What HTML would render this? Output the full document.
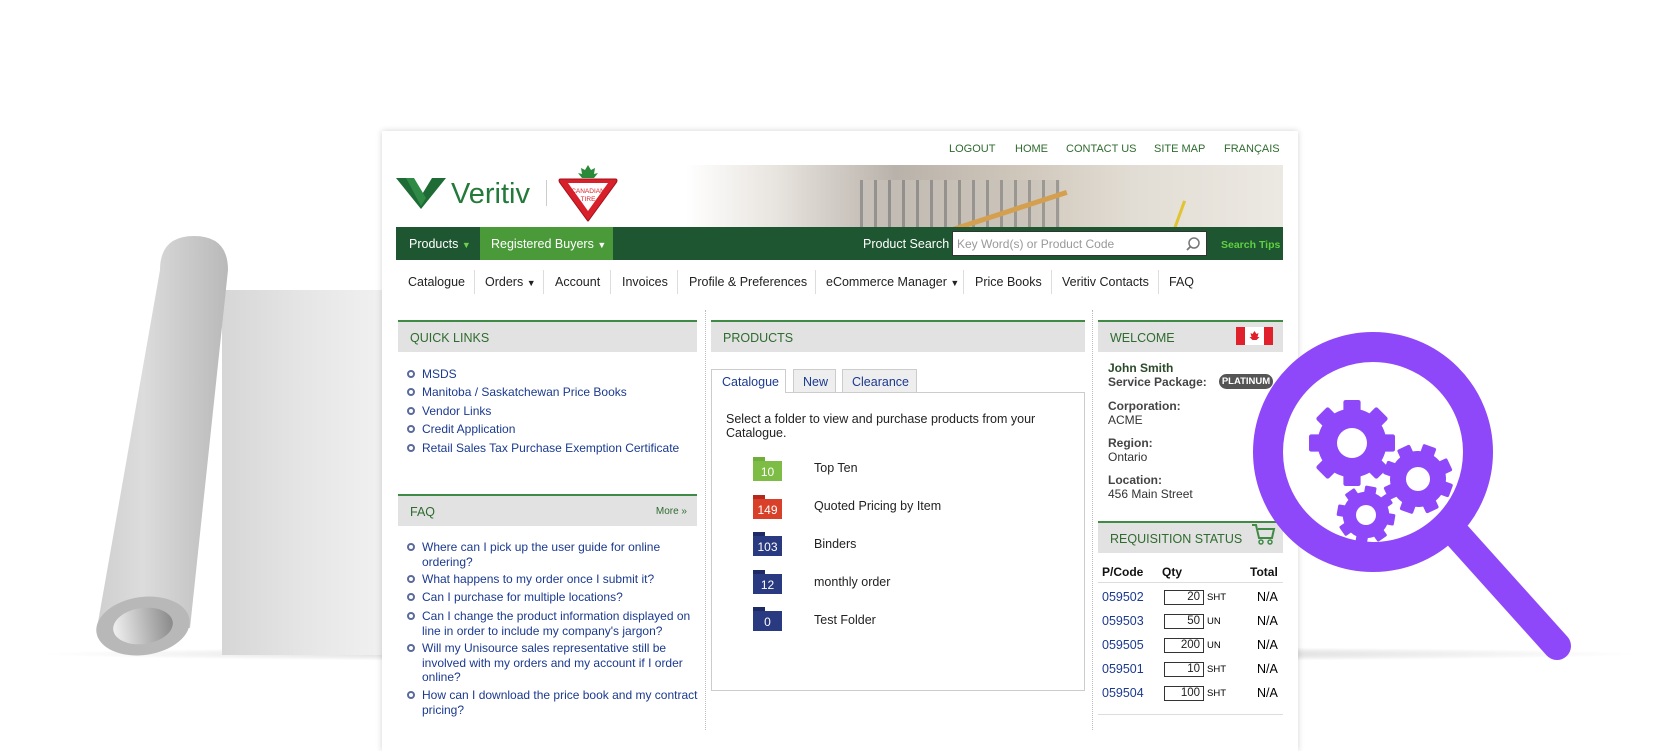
<!DOCTYPE html>
<html><head><meta charset="utf-8"><style>
*{margin:0;padding:0;box-sizing:border-box}
body{width:1680px;height:720px;overflow:hidden;background:#fff;font-family:"Liberation Sans",Arial,sans-serif;position:relative}
.a{position:absolute;white-space:nowrap}
.card{position:absolute;left:382px;top:131px;width:916px;height:620px;background:#fff;box-shadow:0 0 6px rgba(0,0,0,.18)}
.tl{font-size:11px;color:#2f6b2f;top:143px}
.nav{position:absolute;left:396px;top:227px;width:887px;height:33px;background:#1f5632}
.sub{font-size:12.5px;color:#222;top:275px}
.sep{position:absolute;top:270px;width:1px;height:24px;background:#ddd}
.hd{position:absolute;height:32px;background:#e2e2e2;border-top:2px solid #3f8a45;font-size:12.5px;color:#2f6b2f;padding:9px 12px}
.lk{font-size:12px;color:#1b3a8f;left:422px;line-height:14.5px;white-space:normal;width:276px}
.bul{position:absolute;left:-15px;top:3px;width:8px;height:8px;border:2px solid #5a6a9a;border-radius:50%}
.fd{position:absolute;left:753px;width:29px;height:24px}
.fd b{position:absolute;left:0;top:0;width:12px;height:4px}
.fd i{position:absolute;left:0;top:4px;width:29px;height:20px;font-style:normal;color:#fff;font-size:12px;text-align:center;line-height:22px}
.fl{font-size:12.5px;color:#222;left:814px}
.w{font-size:12px;color:#333;left:1108px}
.wb{font-weight:bold;color:#444}
.row{font-size:12.5px}
.qty{position:absolute;left:1164px;width:40px;height:15px;border:1px solid #333;font-size:11.5px;text-align:right;padding-right:3px;line-height:13px;color:#222}
</style></head><body>
<div class="a" style="left:30px;top:646px;width:1620px;height:16px;border-radius:50%;background:radial-gradient(ellipse at center,rgba(0,0,0,.25),rgba(0,0,0,0) 70%)"></div>
<svg class="a" style="left:0;top:0" width="400" height="720">
<defs>
<linearGradient id="sh" x1="0" x2="1"><stop offset="0" stop-color="#d6d6d6"/><stop offset=".5" stop-color="#e6e6e6"/><stop offset="1" stop-color="#f2f2f2"/></linearGradient>
<linearGradient id="tb" x1="0" x2="1"><stop offset="0" stop-color="#cfcfcf"/><stop offset=".35" stop-color="#dcdcdc"/><stop offset="1" stop-color="#b9b9b9"/></linearGradient>
<linearGradient id="hl" x1="0" x2="1"><stop offset="0" stop-color="#f0f0f0"/><stop offset="1" stop-color="#8a8a8a"/></linearGradient>
</defs>
<rect x="222" y="290" width="170" height="365" fill="url(#sh)"/>
<path d="M160 270 Q160 236 194 236 Q228 236 228 270 L190 628 L97 628 Z" fill="url(#tb)"/>
<ellipse cx="143" cy="626" rx="47" ry="29" transform="rotate(-8 143 626)" fill="#b8b8b8"/>
<ellipse cx="143" cy="626" rx="30" ry="18" transform="rotate(-8 143 626)" fill="url(#hl)"/>
</svg>
<div class="card"></div>
<div class="a tl" style="left:949px">LOGOUT</div>
<div class="a tl" style="left:1015px">HOME</div>
<div class="a tl" style="left:1066px">CONTACT US</div>
<div class="a tl" style="left:1154px">SITE MAP</div>
<div class="a tl" style="left:1224px">FRANÇAIS</div>
<svg class="a" style="left:396px;top:176px" width="52" height="34"><path d="M0 2 H14 L25 20 L36 2 H50 L25 33 Z" fill="#1e6b36"/><path d="M10 2 H18 L30 22 L25 30 Z" fill="#2f8a45"/></svg>
<div class="a" style="left:451px;top:178px;font-size:29px;color:#237a3b">Veritiv</div>
<div class="a" style="left:546px;top:180px;width:1px;height:26px;background:#ccc"></div>
<svg class="a" style="left:556px;top:163px" width="64" height="60"><path d="M32 2 l3 5 4-2-1 6 4-1-4 5H26l-4-5 4 1-1-6 4 2z" fill="#2a8a3a"/><path d="M4 16 H60 Q62 17 60 20 L33 57 Q32 59 31 57 L4 20 Q2 17 4 16Z" fill="#d8202a" stroke="#a0101a" stroke-width="1"/><path d="M12 20 H52 L32 48 Z" fill="#fff"/><text x="32" y="30" font-size="6.5" fill="#d8202a" text-anchor="middle" font-family="Liberation Sans">CANADIAN</text><text x="32" y="38" font-size="6.5" fill="#d8202a" text-anchor="middle" font-family="Liberation Sans">TIRE</text></svg>
<div class="a" style="left:686px;top:165px;width:597px;height:62px;background:linear-gradient(90deg,#fff 0%,#e8e4df 15%,#b9b2aa 35%,#cfc6ba 55%,#e2ddd4 75%,#ece9e3 100%)"></div>
<div class="a" style="left:860px;top:180px;width:200px;height:47px;background:repeating-linear-gradient(90deg,#777 0 3px,#c8c2ba 3px 14px);opacity:.6"></div>
<div class="a" style="left:940px;top:210px;width:130px;height:5px;background:#d4a050;transform:rotate(-18deg)"></div>
<div class="a" style="left:1178px;top:200px;width:3px;height:30px;background:#e2c330;transform:rotate(20deg)"></div>
<div class="nav"></div>
<div class="a" style="left:480px;top:227px;width:133px;height:33px;background:#4a9a3a"></div>
<div class="a" style="left:409px;top:237px;font-size:12.5px;color:#fff">Products <span style="color:#6fd04f;font-size:9px">▼</span></div>
<div class="a" style="left:491px;top:237px;font-size:12.5px;color:#fff">Registered Buyers <span style="font-size:9px">▼</span></div>
<div class="a" style="left:863px;top:237px;font-size:12.5px;color:#fff">Product Search</div>
<div class="a" style="left:952px;top:231px;width:255px;height:25px;background:#fff;border:1px solid #333;font-size:12px;color:#999;padding:5px 4px">Key Word(s) or Product Code</div>
<svg class="a" style="left:1185px;top:236px" width="16" height="16"><circle cx="9" cy="7" r="5" fill="none" stroke="#777" stroke-width="1.5"/><path d="M5.5 10.5 L2 14" stroke="#777" stroke-width="1.8"/></svg>
<div class="a" style="left:1221px;top:239px;font-size:10.5px;color:#5fd040;font-weight:bold">Search Tips</div>
<div class="a sub" style="left:408px">Catalogue</div><div class="sep" style="left:474px"></div>
<div class="a sub" style="left:485px">Orders <span style="font-size:9px">▼</span></div><div class="sep" style="left:543px"></div>
<div class="a sub" style="left:555px">Account</div><div class="sep" style="left:610px"></div>
<div class="a sub" style="left:622px">Invoices</div><div class="sep" style="left:677px"></div>
<div class="a sub" style="left:689px">Profile &amp; Preferences</div><div class="sep" style="left:815px"></div>
<div class="a sub" style="left:826px">eCommerce Manager <span style="font-size:9px">▼</span></div><div class="sep" style="left:963px"></div>
<div class="a sub" style="left:975px">Price Books</div><div class="sep" style="left:1051px"></div>
<div class="a sub" style="left:1062px">Veritiv Contacts</div><div class="sep" style="left:1158px"></div>
<div class="a sub" style="left:1169px">FAQ</div>
<div class="a" style="left:705px;top:310px;height:420px;border-left:1px dotted #bbb"></div>
<div class="a" style="left:1092px;top:310px;height:420px;border-left:1px dotted #bbb"></div>
<div class="hd" style="left:398px;top:320px;width:299px">QUICK LINKS</div>
<div class="a lk" style="top:367px"><span class="bul"></span>MSDS</div>
<div class="a lk" style="top:385px"><span class="bul"></span>Manitoba / Saskatchewan Price Books</div>
<div class="a lk" style="top:404px"><span class="bul"></span>Vendor Links</div>
<div class="a lk" style="top:422px"><span class="bul"></span>Credit Application</div>
<div class="a lk" style="top:441px"><span class="bul"></span>Retail Sales Tax Purchase Exemption Certificate</div>
<div class="hd" style="left:398px;top:494px;width:299px">FAQ<span style="position:absolute;right:10px;top:10px;font-size:10px">More »</span></div>
<div class="a lk" style="top:540px"><span class="bul"></span>Where can I pick up the user guide for online ordering?</div>
<div class="a lk" style="top:572px"><span class="bul"></span>What happens to my order once I submit it?</div>
<div class="a lk" style="top:590px"><span class="bul"></span>Can I purchase for multiple locations?</div>
<div class="a lk" style="top:609px"><span class="bul"></span>Can I change the product information displayed on line in order to include my company's jargon?</div>
<div class="a lk" style="top:641px"><span class="bul"></span>Will my Unisource sales representative still be involved with my orders and my account if I order online?</div>
<div class="a lk" style="top:688px"><span class="bul"></span>How can I download the price book and my contract pricing?</div>
<div class="hd" style="left:711px;top:320px;width:374px">PRODUCTS</div>
<div class="a" style="left:711px;top:392px;width:374px;height:299px;border:1px solid #ccc"></div>
<div class="a" style="left:711px;top:369px;width:75px;height:24px;background:#fff;border:1px solid #ccc;border-bottom:none;font-size:12.5px;color:#1b3a8f;padding:5px 10px">Catalogue</div>
<div class="a" style="left:793px;top:369px;width:43px;height:23px;background:#eee;border:1px solid #ccc;border-bottom:none;font-size:12.5px;color:#1b3a8f;padding:5px 9px">New</div>
<div class="a" style="left:842px;top:369px;width:75px;height:23px;background:#eee;border:1px solid #ccc;border-bottom:none;font-size:12.5px;color:#1b3a8f;padding:5px 9px">Clearance</div>
<div class="a" style="left:726px;top:412px;font-size:12.5px;color:#222;line-height:14px">Select a folder to view and purchase products from your<br>Catalogue.</div>
<div class="fd" style="top:457px"><b style="background:#6fae3a"></b><i style="background:#7dbd45">10</i></div>
<div class="fd" style="top:495px"><b style="background:#b8281a"></b><i style="background:#d8402a">149</i></div>
<div class="fd" style="top:532px"><b style="background:#1d2a66"></b><i style="background:#2a3a80">103</i></div>
<div class="fd" style="top:570px"><b style="background:#1d2a66"></b><i style="background:#2a3a80">12</i></div>
<div class="fd" style="top:607px"><b style="background:#1d2a66"></b><i style="background:#2a3a80">0</i></div>
<div class="a fl" style="top:461px">Top Ten</div>
<div class="a fl" style="top:499px">Quoted Pricing by Item</div>
<div class="a fl" style="top:537px">Binders</div>
<div class="a fl" style="top:575px">monthly order</div>
<div class="a fl" style="top:613px">Test Folder</div>
<div class="hd" style="left:1098px;top:320px;width:185px">WELCOME</div>
<svg class="a" style="left:1236px;top:327px" width="37" height="18"><rect width="37" height="18" fill="#fff"/><rect width="9" height="18" fill="#e0202a"/><rect x="28" width="9" height="18" fill="#e0202a"/><path d="M18.5 4 l2 3 2-1-1 4 2 0-3 3h-4l-3-3 2 0-1-4 2 1z" fill="#e0202a"/></svg>
<div class="a w wb" style="top:361px;color:#2a4a2a">John Smith</div>
<div class="a w wb" style="top:375px">Service Package:</div>
<div class="a" style="left:1219px;top:374px;width:54px;height:15px;background:#555;border-radius:8px;color:#fff;font-size:9.5px;font-weight:bold;text-align:center;line-height:15px">PLATINUM</div>
<div class="a w wb" style="top:399px">Corporation:</div><div class="a w" style="top:413px">ACME</div>
<div class="a w wb" style="top:436px">Region:</div><div class="a w" style="top:450px">Ontario</div>
<div class="a w wb" style="top:473px">Location:</div><div class="a w" style="top:487px">456 Main Street</div>
<div class="hd" style="left:1098px;top:521px;width:185px">REQUISITION STATUS</div>
<svg class="a" style="left:1250px;top:522px" width="26" height="24"><path d="M2 3 H6 L9 16 H22 L24 7 H8" fill="none" stroke="#3f8a45" stroke-width="2"/><circle cx="11" cy="20" r="2" fill="none" stroke="#3f8a45" stroke-width="1.5"/><circle cx="20" cy="20" r="2" fill="none" stroke="#3f8a45" stroke-width="1.5"/></svg>
<div class="a" style="left:1102px;top:565px;font-size:12px;font-weight:bold;color:#111">P/Code</div>
<div class="a" style="left:1162px;top:565px;font-size:12px;font-weight:bold;color:#111">Qty</div>
<div class="a" style="left:1250px;top:565px;font-size:12px;font-weight:bold;color:#111">Total</div>
<div class="a" style="left:1098px;top:582px;width:185px;height:1px;background:#ddd"></div>
<div class="a row" style="left:1102px;top:590px;color:#1b3a8f">059502</div><div class="qty" style="top:590px">20</div><div class="a" style="left:1207px;top:592px;font-size:9.5px">SHT</div><div class="a row" style="left:1257px;top:590px">N/A</div>
<div class="a row" style="left:1102px;top:614px;color:#1b3a8f">059503</div><div class="qty" style="top:614px">50</div><div class="a" style="left:1207px;top:616px;font-size:9.5px">UN</div><div class="a row" style="left:1257px;top:614px">N/A</div>
<div class="a row" style="left:1102px;top:638px;color:#1b3a8f">059505</div><div class="qty" style="top:638px">200</div><div class="a" style="left:1207px;top:640px;font-size:9.5px">UN</div><div class="a row" style="left:1257px;top:638px">N/A</div>
<div class="a row" style="left:1102px;top:662px;color:#1b3a8f">059501</div><div class="qty" style="top:662px">10</div><div class="a" style="left:1207px;top:664px;font-size:9.5px">SHT</div><div class="a row" style="left:1257px;top:662px">N/A</div>
<div class="a row" style="left:1102px;top:686px;color:#1b3a8f">059504</div><div class="qty" style="top:686px">100</div><div class="a" style="left:1207px;top:688px;font-size:9.5px">SHT</div><div class="a row" style="left:1257px;top:686px">N/A</div>
<div class="a" style="left:1098px;top:714px;width:185px;height:1px;background:#ddd"></div>
<svg class="a" style="left:0;top:0" width="1680" height="720">
<defs>
<g id="g8"><circle r="0.8"/><g><rect x="-0.2" y="-1" width="0.4" height="2" rx=".05"/><rect x="-0.2" y="-1" width="0.4" height="2" rx=".05" transform="rotate(45)"/><rect x="-0.2" y="-1" width="0.4" height="2" rx=".05" transform="rotate(90)"/><rect x="-0.2" y="-1" width="0.4" height="2" rx=".05" transform="rotate(135)"/></g></g>
</defs>
<circle cx="1373" cy="452" r="105" fill="#fff"/>
<line x1="1450" y1="527" x2="1557" y2="646" stroke="#8e48fa" stroke-width="28" stroke-linecap="round"/>
<circle cx="1373" cy="452" r="105" fill="none" stroke="#8e48fa" stroke-width="30"/>
<g fill="#8e48fa">
<use href="#g8" transform="translate(1352 443) scale(43)"/>
<use href="#g8" transform="translate(1418 479) rotate(20) scale(35)"/>
<use href="#g8" transform="translate(1366 515) rotate(10) scale(29)"/>
</g>
<g fill="#fff"><circle cx="1352" cy="443" r="15"/><circle cx="1418" cy="479" r="12"/><circle cx="1366" cy="515" r="10"/></g>
</svg>
</body></html>
